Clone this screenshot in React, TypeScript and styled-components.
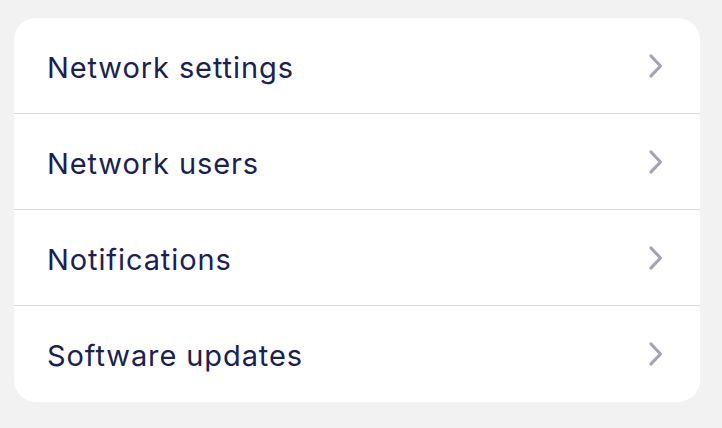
import styled, { createGlobalStyle } from 'styled-components';

const GlobalStyle = createGlobalStyle`
  html, body {
    margin: 0;
    padding: 0;
    background: #f2f2f2;
  }
  body {
    font-family: Inter, "Noto Sans", sans-serif;
  }
`

const Page = styled.div`
  width: 722px;
  height: 428px;
  padding: 18px 22px 0 14px;
  box-sizing: border-box;
`

const Card = styled.div`
  background: #ffffff;
  border-radius: 22px;
  overflow: hidden;
  display: flex;
  flex-direction: column;
`

const Row = styled.div`
  height: 96px;
  box-sizing: border-box;
  display: flex;
  align-items: center;
  justify-content: space-between;
  padding: 0 36px 0 33px;
  border-bottom: 1px solid #d9d9d9;

  &:last-child {
    border-bottom: none;
  }
`

const Label = styled.span`
  font-size: 29px;
  color: #1b2150;
  letter-spacing: 0.9px;
  margin-top: 3px;
`

const Chevron = () => (
  <svg width="16" height="26" viewBox="0 0 16 26" fill="none">
    <path d="M3 3 L12.5 13 L3 23" stroke="#a2a4b9" strokeWidth="3.2" strokeLinecap="round" strokeLinejoin="round" />
  </svg>
)

const items = ['Network settings', 'Network users', 'Notifications', 'Software updates']

export default function App() {
  return (
    <>
      <GlobalStyle />
      <Page>
        <Card>
          {items.map((item) => (
            <Row key={item}>
              <Label>{item}</Label>
              <Chevron />
            </Row>
          ))}
        </Card>
      </Page>
    </>
  )
}
